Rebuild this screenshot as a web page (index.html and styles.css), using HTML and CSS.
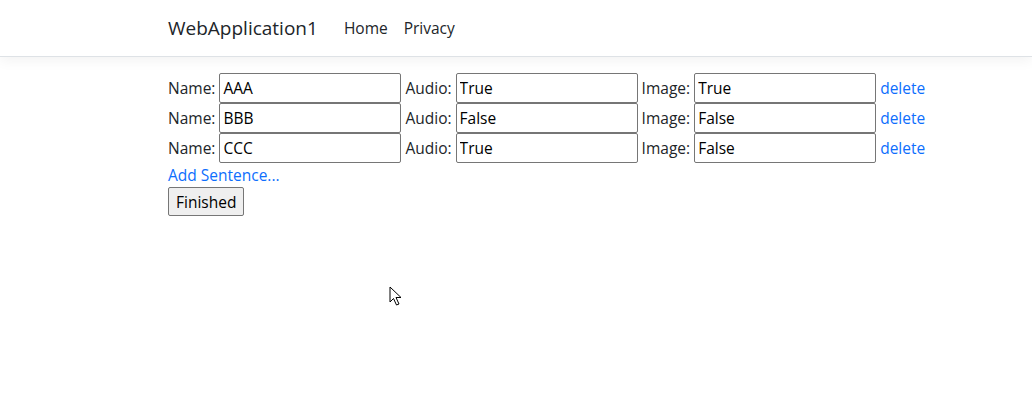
FILE: index.html
```html
<!DOCTYPE html>
<html>
  <head>
    <title>Sentences - WebApplication1</title>
    <link rel="stylesheet" href="styles.css">
  </head>
  <body>
    <header class="navbar">
      <div class="container nav-inner">
        <a class="brand" href="#">WebApplication1</a>
        <a class="nav-link" href="#">Home</a>
        <a class="nav-link" href="#">Privacy</a>
      </div>
    </header>
    <main class="container">
      <form class="sentences">
        <div class="row">
          Name: <input type="text" value="AAA">
          Audio: <input type="text" value="True">
          Image: <input type="text" value="True">
          <a href="#">delete</a>
        </div>
        <div class="row">
          Name: <input type="text" value="BBB">
          Audio: <input type="text" value="False">
          Image: <input type="text" value="False">
          <a href="#">delete</a>
        </div>
        <div class="row">
          Name: <input type="text" value="CCC">
          Audio: <input type="text" value="True">
          Image: <input type="text" value="False">
          <a href="#">delete</a>
        </div>
        <a class="add" href="#">Add Sentence...</a>
        <div>
          <button type="button" class="finish">Finished</button>
        </div>
      </form>
    </main>
    <!-- mouse pointer caught in the capture -->
    <svg class="cursor" width="16" height="22" viewBox="0 0 16 22">
      <path d="M1 1 L1 16 L4.5 12.5 L7.5 19 L10 18 L7 11.5 L12 11.5 Z" fill="#fff" stroke="#000" stroke-width="1"/>
    </svg>
  </body>
</html>
```

FILE: styles.css
```css
* {
  box-sizing: border-box;
}
body {
  margin: 0;
  font-family: "Open Sans", sans-serif;
  font-size: 15.5px;
  line-height: 24px;
  color: #212529;
  background: #fff;
}
a {
  color: #0d6efd;
  text-decoration: none;
}
.container {
  max-width: 720px;
  margin: 0 auto;
  padding: 0 12px;
}
.navbar {
  padding: 8px 0;
  border-bottom: 1px solid #dee2e6;
  box-shadow: 0 4px 12px rgba(0, 0, 0, 0.05);
  margin-bottom: 16px;
}
.nav-inner {
  display: flex;
  align-items: center;
}
.brand {
  font-size: 19px;
  line-height: 30px;
  padding: 5px 0;
  margin-right: 18px;
  color: #212529;
}
.nav-link {
  padding: 8px;
  color: #212529;
}
.sentences {
  white-space: nowrap;
}
.row {
  height: 30px;
  line-height: 30px;
}
.row input {
  width: 182px;
  height: 30px;
  padding: 1px 3px;
  border: 1px solid #767676;
  border-radius: 2px;
  font: inherit;
  line-height: 24px;
  color: #000;
  vertical-align: top;
}
.add {
  display: inline-block;
}
.finish {
  font: inherit;
  color: #000;
  padding: 1px 7px;
  height: 29px;
  border: 1px solid #767676;
  border-radius: 2px;
  background: #efefef;
}
.cursor {
  position: absolute;
  left: 389px;
  top: 286px;
}
```
